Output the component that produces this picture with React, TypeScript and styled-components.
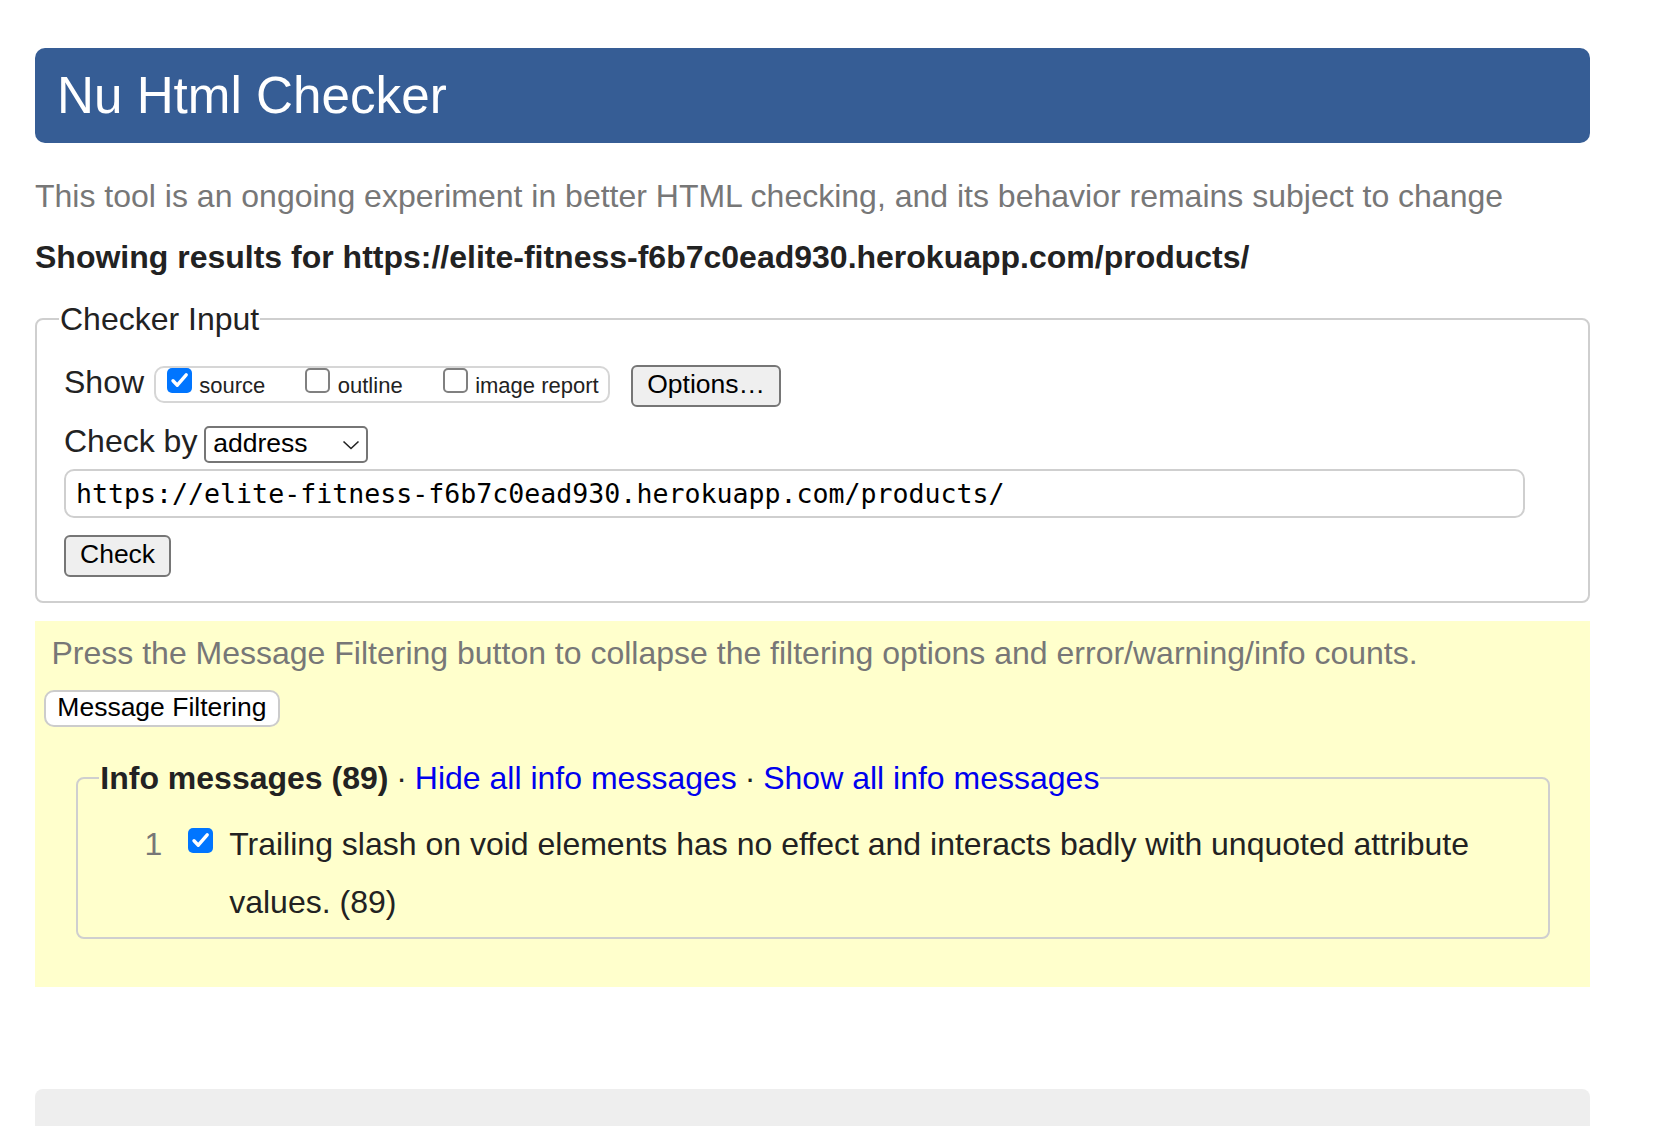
import { styled, createGlobalStyle } from 'styled-components';

const GlobalStyle = createGlobalStyle`
  html, body {
    margin: 0;
    padding: 0;
    background: #fff;
    overflow: hidden;
  }
  body {
    font-family: "Liberation Sans", Arial, Helvetica, sans-serif;
    color: #222;
  }
  * {
    box-sizing: border-box;
  }
`;

const Page = styled.div`
  padding: 47.5px 66px 0 35px;
`;

const Header = styled.h1`
  margin: 0;
  height: 95px;
  display: flex;
  align-items: center;
  padding-left: 22px;
  background-color: #365d95;
  color: #fff;
  border-radius: 10px;
  font-size: 51.2px;
  font-weight: 400;
`;

const Lead = styled.p`
  margin: 35.4px 0 0;
  font-size: 32px;
  color: #777;
`;

const ResultsFor = styled.p`
  margin: 24px 0 0;
  font-size: 32px;
  font-weight: 700;
  color: #222;
`;

const Fieldset = styled.fieldset<{ $margin: string; $padding: string }>`
  margin: ${(p) => p.$margin};
  padding: ${(p) => p.$padding};
  border: 2px solid #cfcfcf;
  border-radius: 8px;
  min-width: 0;
`;

const Legend = styled.legend<{ $shift: number }>`
  padding: 0 1px;
  margin-left: ${(p) => p.$shift}px;
  font-size: 32px;
  color: #222;
`;

const ControlRow = styled.div<{ $top: number }>`
  display: flex;
  align-items: baseline;
  margin-top: ${(p) => p.$top}px;
`;

const FieldLabel = styled.span<{ $space: number }>`
  font-size: 32px;
  margin-right: ${(p) => p.$space}px;
  color: #222;
`;

const OptionGroup = styled.div`
  display: inline-flex;
  align-items: baseline;
  gap: 40px;
  height: 37px;
  padding: 0 9px 0 11px;
  border: 2px solid #d6d6d6;
  border-radius: 10px;
  font-size: 22px;
`;

const OptionLabel = styled.label`
  display: block;
  white-space: nowrap;
  color: #222;
`;

const Box = styled.span<{ $checked?: boolean }>`
  display: inline-block;
  vertical-align: baseline;
  overflow: hidden;
  width: 25px;
  height: 25px;
  margin-right: 7.5px;
  border-radius: 5px;
  background: ${(p) => (p.$checked ? '#0075ff' : '#fff')};
  border: ${(p) => (p.$checked ? 'none' : '2px solid #808080')};

  svg {
    display: block;
  }
`;

const PlainButton = styled.button<{ $height: number; $light?: boolean }>`
  height: ${(p) => p.$height}px;
  padding: 0 14px 3px;
  font-family: "Liberation Sans", Arial, Helvetica, sans-serif;
  font-size: 26.5px;
  color: #000;
  background: ${(p) => (p.$light ? '#fff' : '#efefef')};
  border: 2px solid ${(p) => (p.$light ? '#cccccc' : '#767676')};
  border-radius: ${(p) => (p.$light ? 10 : 6)}px;
`;

const OptionsButton = styled(PlainButton)`
  margin-left: 21.6px;
`;

const SelectBox = styled.div`
  display: inline-flex;
  align-items: flex-start;
  justify-content: space-between;
  width: 164px;
  height: 36.6px;
  padding: 0 6px 0 7.5px;
  border: 2px solid #767676;
  border-radius: 5px;
  font-size: 26.5px;
  color: #000;
  background: #fff;

  svg {
    align-self: center;
  }
`;

const UrlInput = styled.input`
  display: block;
  width: 1461px;
  height: 49px;
  margin-top: 6px;
  padding: 0 10px;
  font-family: "DejaVu Sans Mono", "Liberation Mono", monospace;
  font-size: 26.6px;
  color: #000;
  background: #fff;
  border: 2px solid #cfcfcf;
  border-radius: 10px;
  outline: none;
`;

const CheckButton = styled(PlainButton)`
  display: block;
  margin-top: 17px;
`;

const Filters = styled.section`
  margin-top: 18px;
  background-color: #ffffcc;
  padding: 14px 16.5px 47.7px;
`;

const Hint = styled.p`
  margin: 0;
  font-size: 32px;
  color: #777;
`;

const FilterButton = styled(PlainButton)`
  display: block;
  margin: 18.2px 0 0 -7.7px;
  padding: 0 11.5px 2px;
`;

const Sep = styled.span`
  margin: 0 -1px;
  color: #222;
  font-weight: 400;
`;

const Link = styled.a`
  color: #0000ee;
  text-decoration: none;
  font-weight: 400;
`;

const ItemRow = styled.div`
  display: flex;
  align-items: flex-start;
  margin-top: 19.3px;
  font-size: 32px;
  line-height: 57.6px;
`;

const ItemNumber = styled.span`
  flex: none;
  width: 60px;
  text-align: right;
  color: #777;
`;

const ItemBox = styled(Box)`
  flex: none;
  margin: 11.6px 16.1px 0 25.8px;
`;

const ItemText = styled.span`
  flex: 1;
  min-width: 0;
  color: #222;
`;

const Footer = styled.div`
  margin-top: 101.7px;
  height: 38px;
  background-color: #eeeeee;
  border-radius: 8px 8px 0 0;
`;

const CheckMark = () => (
  <svg width="25" height="25" viewBox="0 0 25 25">
    <path
      d="M6 12.8l4.3 4.4L19.2 6.8"
      fill="none"
      stroke="#fff"
      strokeWidth="3.4"
      strokeLinecap="round"
      strokeLinejoin="round"
    />
  </svg>
);

const Checkbox = ({ checked }: { checked?: boolean }) => (
  <Box $checked={checked}>{checked && <CheckMark />}</Box>
);

const url = 'https://elite-fitness-f6b7c0ead930.herokuapp.com/products/';

const App = () => {
  return (
    <Page>
      <GlobalStyle />
      <Header>Nu Html Checker</Header>
      <Lead>
        This tool is an ongoing experiment in better HTML checking, and its
        behavior remains subject to change
      </Lead>
      <ResultsFor>Showing results for {url}</ResultsFor>

      <Fieldset $margin="25px 0 0" $padding="0 27px 24px">
        <Legend $shift={-5}>Checker Input</Legend>
        <ControlRow $top={26.5}>
          <FieldLabel $space={9.7}>Show</FieldLabel>
          <OptionGroup>
            <OptionLabel>
              <Checkbox checked />
              source
            </OptionLabel>
            <OptionLabel>
              <Checkbox />
              outline
            </OptionLabel>
            <OptionLabel>
              <Checkbox />
              image report
            </OptionLabel>
          </OptionGroup>
          <OptionsButton $height={42}>Options…</OptionsButton>
        </ControlRow>
        <ControlRow $top={16}>
          <FieldLabel $space={6.3}>Check by</FieldLabel>
          <SelectBox>
            <span>address</span>
            <svg width="18" height="10" viewBox="0 0 18 10">
              <path d="M1.5 1.5l7.5 7 7.5-7" fill="none" stroke="#222" strokeWidth="1.6" />
            </svg>
          </SelectBox>
        </ControlRow>
        <UrlInput defaultValue={url} readOnly />
        <CheckButton $height={41.7}>Check</CheckButton>
      </Fieldset>

      <Filters>
        <Hint>
          Press the Message Filtering button to collapse the filtering options
          and error/warning/info counts.
        </Hint>
        <FilterButton $height={37} $light>
          Message Filtering
        </FilterButton>
        <Fieldset $margin="33px 23.5px 0 24.8px" $padding="0 24px 6px">
          <Legend $shift={-3}>
            <strong>Info messages (89)</strong>
            <Sep> · </Sep>
            <Link href="#">Hide all info messages</Link>
            <Sep> · </Sep>
            <Link href="#">Show all info messages</Link>
          </Legend>
          <ItemRow>
            <ItemNumber>1</ItemNumber>
            <ItemBox $checked>
              <CheckMark />
            </ItemBox>
            <ItemText>
              Trailing slash on void elements has no effect and interacts badly
              with unquoted attribute values. (89)
            </ItemText>
          </ItemRow>
        </Fieldset>
      </Filters>

      <Footer />
    </Page>
  );
};

export default App;
